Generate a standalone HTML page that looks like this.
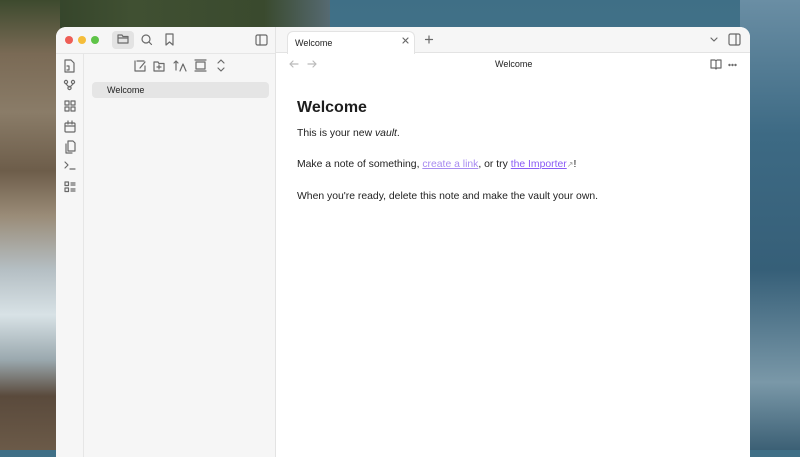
<!DOCTYPE html>
<html><head><meta charset="utf-8"><style>
*{margin:0;padding:0;box-sizing:border-box}
body{width:800px;height:450px;overflow:hidden;position:relative;font-family:"Liberation Sans",sans-serif;
background:linear-gradient(180deg,#3f6f86 0%,#4b7890 40%,#5a8aa0 100%);}
.bgl{position:absolute;left:0;top:0;width:60px;height:450px;background:linear-gradient(180deg,#3d4a2e 0%,#7a6a55 12%,#8a7c68 25%,#6d5d4a 38%,#9a8c78 48%,#b5bfc4 60%,#d8e2e6 70%,#9aa8ae 80%,#5a4a3c 88%,#6b5a48 100%)}
.bgt{position:absolute;left:0;top:0;width:330px;height:30px;background:linear-gradient(90deg,#2e3d26,#405032 40%,#3a4a2e 80%,#566a72)}
.bgr{position:absolute;left:740px;top:0;width:60px;height:450px;background:linear-gradient(180deg,#6a8ea4 0%,#3d6a84 30%,#365f78 60%,#7a98a8 85%,#3c6075 100%)}
.win{position:absolute;left:56px;top:27px;width:694px;height:430px;background:#fff;border-radius:10px 10px 0 0;overflow:hidden}
.left{position:absolute;left:0;top:0;width:220px;height:100%;background:#f6f6f6;border-right:1px solid #e3e3e3}
.ribbon{position:absolute;left:0;top:26px;width:28px;bottom:0;border-right:1px solid #e6e6e6;border-top:1px solid #e6e6e6}
.sidetop{position:absolute;left:28px;right:0;top:26px;height:1px;background:#e6e6e6}
.dot{position:absolute;top:9px;width:8px;height:8px;border-radius:50%}
.tabbar{position:absolute;left:220px;top:0;right:0;height:26px;background:#f6f6f6;border-bottom:1px solid #e3e3e3}
.tab{position:absolute;left:11px;top:4px;width:128px;height:23px;background:#fff;border-radius:6px 6px 0 0;border:1px solid #e3e3e3;border-bottom:none;font-size:9px;color:#222;padding:6px 0 0 7px}
svg{position:absolute}
.ic{stroke:#6a6a6a;fill:none;stroke-width:1.2;stroke-linecap:round;stroke-linejoin:round}
.item{position:absolute;left:36px;top:55px;width:177px;height:16px;background:#e5e5e5;border-radius:4px;font-size:9px;color:#222;padding:3px 0 0 15px}
.content{position:absolute;left:241px;top:72px;color:#222;font-size:10.4px}
h1{font-size:16px;font-weight:bold;color:#1e1e1e;margin-bottom:10.5px}
p{margin-bottom:20.5px}
a{color:#8a5cf5;text-decoration:underline}
</style></head><body>
<div class="bgt"></div><div class="bgl"></div><div class="bgr"></div>
<div class="win">
 <div class="left">
  <div class="dot" style="left:9px;background:#ee5e56"></div>
  <div class="dot" style="left:22px;background:#f5bd3a"></div>
  <div class="dot" style="left:35px;background:#5fc448"></div>
  <div style="position:absolute;left:56px;top:4px;width:22px;height:18px;background:#e3e3e3;border-radius:4px"></div>
  <svg width="220" height="26" class="ic">
   <path d="M62 8h4l1 1.5h5v6.5h-10z M62 11h10"/>
   <circle cx="90" cy="12" r="4"/><path d="M93 15l2.5 2.5"/>
   <path d="M110 7h7v11l-3.5-3-3.5 3z"/>
   <rect x="200" y="8" width="11" height="10" rx="1.5"/><path d="M204 8v10"/>
  </svg>
  <div class="ribbon">
   <svg width="28" height="180" class="ic">
    <path d="M9 6h6l3 3v9h-9z M11 12h2v4h-2"/>
    <circle cx="10" cy="28" r="1.6"/><circle cx="17" cy="28" r="1.6"/><circle cx="13.5" cy="34" r="1.6"/><path d="M10 30l3 3 M17 30l-3 3"/>
    <rect x="9" y="47" width="4" height="4"/><rect x="15" y="47" width="4" height="4"/><rect x="9" y="53" width="4" height="4"/><rect x="15" y="53" width="4" height="4"/>
    <rect x="9" y="69" width="10" height="9" rx="1"/><path d="M9 72h10 M12 67v3 M16 67v3"/>
    <path d="M12 87h5l2 2v8h-7z M10 90v9h6"/>
    <path d="M9 108l3 3-3 3 M14 115h5"/>
    <rect x="9" y="128" width="3.5" height="3.5"/><rect x="9" y="134" width="3.5" height="3.5"/><path d="M15 129h4 M15 131h4 M15 135h4 M15 137h4"/>
   </svg>
  </div>
  <div class="sidetop"></div>
  <svg width="220" height="60" class="ic">
   <path d="M81 34h7 M79 34v10h10v-5 M84 41l5-6"/>
   <path d="M98 35h4l1 1.5h5v7.5h-10z M103 38v4 M101 40h4"/>
   <path d="M120 43v-9l-2 2 M120 34l2 2 M124 44l3-7 3 7"/>
   <path d="M139 33h11 M140 35h9v7h-9z M139 44h11"/>
   <path d="M162 36l3-3 3 3 M162 41l3 3 3-3"/>
  </svg>
  <div class="item">Welcome</div>
 </div>
 <div class="tabbar">
  <div class="tab">Welcome</div>
  <svg width="474" height="26" class="ic">
   <path d="M127 11l5 5 M132 11l-5 5"/>
   <path d="M153 9v7 M149.5 12.5h7"/>
   <path d="M435 11l3 3 3-3"/>
   <rect x="453" y="7" width="11" height="11" rx="1.5"/><path d="M460 7v11"/>
  </svg>
 </div>
 <svg width="694" height="50" style="left:0;top:26px" class="ic">
  <path d="M234 11h8 M237 8l-3 3 3 3" stroke="#bbb"/>
  <path d="M252 11h8 M257 8l3 3-3 3" stroke="#bbb"/>
  <path d="M655 7h4l1 1 1-1h4v8h-4l-1 1-1-1h-4z M660 8v8"/>
  <circle cx="673.5" cy="12" r=".6" fill="#666"/><circle cx="676.5" cy="12" r=".6" fill="#666"/><circle cx="679.5" cy="12" r=".6" fill="#666"/>
 </svg>
 <div style="position:absolute;left:439px;top:32px;font-size:9px;color:#222">Welcome</div>
 <div class="content">
  <h1>Welcome</h1>
  <p>This is your new <i>vault</i>.</p>
  <p>Make a note of something, <a style="color:#a88cf0">create a link</a>, or try <a>the Importer</a><span style="font-size:8px;color:#999">↗</span>!</p>
  <p>When you're ready, delete this note and make the vault your own.</p>
 </div>
</div>
</body></html>
